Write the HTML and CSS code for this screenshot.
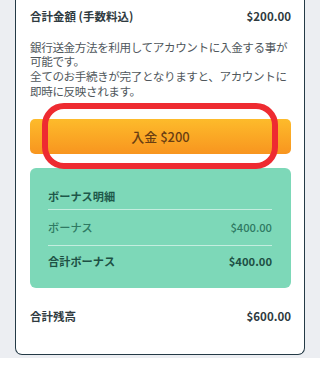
FILE: index.html
```html
<!DOCTYPE html>
<html>
<head>
<meta charset="utf-8">
<link rel="stylesheet" href="styles.css">
</head>
<body>
<div class="page">
  <div class="card">
    <div class="row head">
      <span>合計金額 (手数料込)</span>
      <span>$200.00</span>
    </div>
    <p class="desc">銀行送金方法を利用してアカウントに入金する事が<br>可能です。<br>全てのお手続きが完了となりますと、アカウントに<br>即時に反映されます。</p>
    <button class="btn">入金 $200</button>
    <div class="bonus">
      <div class="bonus-title">ボーナス明細</div>
      <div class="bonus-row light"><span>ボーナス</span><span>$400.00</span></div>
      <div class="bonus-row strong"><span>合計ボーナス</span><span>$400.00</span></div>
    </div>
    <div class="row total">
      <span>合計残高</span>
      <span>$600.00</span>
    </div>
    <div class="mark"></div>
  </div>
</div>
</body>
</html>
```
FILE: styles.css
```css
html, body {
  margin: 0;
  padding: 0;
  background: #ffffff;
}
body {
  font-family: "Noto Sans CJK JP", "Noto Sans", sans-serif;
  color: #333;
}
.page {
  background: #eceef2;
  padding: 0 15px 3px 15px;
}
.card {
  position: relative;
  width: 261px;
  background: #fff;
  border: 1.5px solid #243a46;
  border-top: none;
  border-radius: 0 0 7px 7px;
  padding: 6px 13px 28px 14px;
}
.row {
  display: flex;
  justify-content: space-between;
  align-items: center;
  height: 20px;
  font-size: 11.5px;
  font-weight: 700;
  color: #2f3a40;
}
.desc {
  margin: 13.6px 0 0 0;
  font-size: 11.6px;
  line-height: 14.7px;
  color: #50575c;
  white-space: nowrap;
  letter-spacing: -0.4px;
}
.btn {
  display: block;
  width: 100%;
  height: 35px;
  margin-top: 20.5px;
  border: none;
  border-radius: 5px;
  background: linear-gradient(#fdbb2b, #f8951f);
  color: #6a3e12;
  font-family: "Noto Sans CJK JP", "Noto Sans", sans-serif;
  font-size: 13px;
  font-weight: 500;
  padding: 0;
}
.bonus {
  margin-top: 14px;
  background: #7dd8b8;
  border-radius: 6px;
  padding: 18px 19px 12px 18px;
  height: 90px;
}
.bonus-title {
  height: 20px;
  line-height: 20px;
  font-size: 11.2px;
  font-weight: 700;
  color: #1e584a;
  border-bottom: 1px solid rgba(255,255,255,0.55);
  padding-bottom: 3px;
}
.bonus-row {
  display: flex;
  justify-content: space-between;
  align-items: center;
  font-size: 11.2px;
}
.bonus-row.light {
  height: 35px;
  color: #2f7a63;
  font-weight: 500;
  border-bottom: 1px solid rgba(255,255,255,0.55);
}
.bonus-row.strong {
  height: 30px;
  font-weight: 700;
  color: #1d5044;
}
.total {
  margin-top: 18px;
}
.mark {
  position: absolute;
  left: 26px;
  top: 103px;
  width: 224px;
  height: 54px;
  border: 6px solid #ee2b31;
  border-radius: 22px;
}
```
